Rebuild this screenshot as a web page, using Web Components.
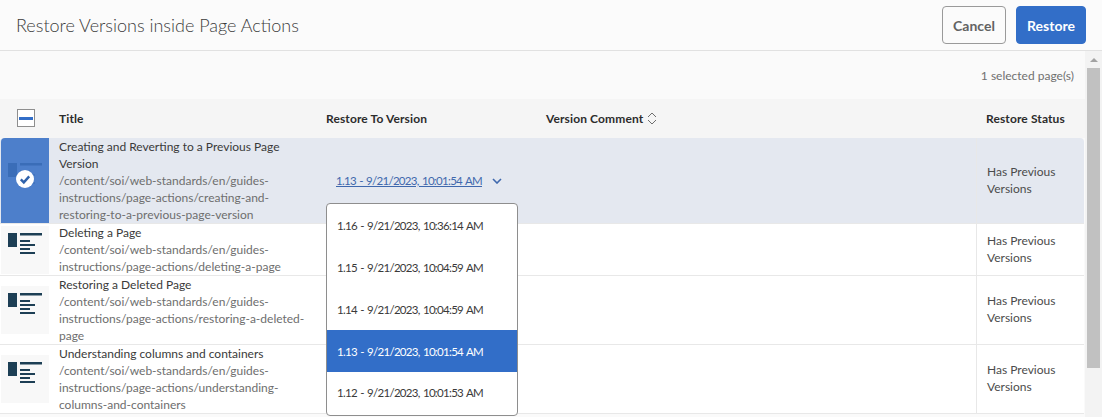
<!DOCTYPE html>
<html>
<head>
<meta charset="utf-8">
<title>Restore Versions</title>
<style>
    html, body { margin: 0; padding: 0; height: 100%; overflow: hidden; }
    body { font-family: Lato, "Open Sans", sans-serif; color: #2c2c2c; background: #fafafa; }
</style>
</head>
<body>

<restore-page>
    <restore-header slot="header" heading="Restore Versions inside Page Actions">
        <restore-button>Cancel</restore-button>
        <restore-button primary>Restore</restore-button>
    </restore-header>

    <restore-row selected>
        <span slot="title">Creating and Reverting to a Previous Page Version</span>
        <span slot="path">/content/soi/web-standards/en/guides-instructions/page-actions/creating-and-restoring-to-a-previous-page-version</span>
        <version-select slot="version" value="1.13 - 9/21/2023, 10:01:54 AM">
            <version-option>1.16 - 9/21/2023, 10:36:14 AM</version-option>
            <version-option>1.15 - 9/21/2023, 10:04:59 AM</version-option>
            <version-option>1.14 - 9/21/2023, 10:04:59 AM</version-option>
            <version-option active>1.13 - 9/21/2023, 10:01:54 AM</version-option>
            <version-option>1.12 - 9/21/2023, 10:01:53 AM</version-option>
        </version-select>
    </restore-row>
    <restore-row>
        <span slot="title">Deleting a Page</span>
        <span slot="path">/content/soi/web-standards/en/guides-instructions/page-actions/deleting-a-page</span>
    </restore-row>
    <restore-row>
        <span slot="title">Restoring a Deleted Page</span>
        <span slot="path">/content/soi/web-standards/en/guides-instructions/page-actions/restoring-a-deleted-page</span>
    </restore-row>
    <restore-row>
        <span slot="title">Understanding columns and containers</span>
        <span slot="path">/content/soi/web-standards/en/guides-instructions/page-actions/understanding-columns-and-containers</span>
    </restore-row>
</restore-page>

<script>
const pageIcon = (main, line, opacity) => `
    <svg width="34" height="21" viewBox="0 0 34 21" style="display:block">
        <rect x="0" y="0" width="9" height="14" fill="${main}"/>
        <rect x="12" y="0" width="22" height="2.5" fill="${main}"/>
        <g fill="${line}" opacity="${opacity}">
            <rect x="12" y="7" width="10" height="2"/>
            <rect x="12" y="11" width="15" height="2"/>
            <rect x="12" y="15" width="10" height="2"/>
            <rect x="12" y="19" width="15" height="2"/>
        </g>
    </svg>`

class RestoreButton extends HTMLElement {
    constructor() {
        super()
        this.attachShadow({ mode: 'open' })
        this.shadowRoot.innerHTML = `
            <style>
                :host { display: inline-block; }
                button {
                    display: block;
                    height: 38px;
                    width: 64px;
                    padding: 0;
                    border: 1px solid #9a9a9a;
                    border-radius: 4px;
                    background: #fbfbfb;
                    color: #636363;
                    font: 700 14px Lato, sans-serif;
                }
                :host([primary]) button {
                    width: 70px;
                    background: #326ec8;
                    border-color: #326ec8;
                    color: #fff;
                }
            </style>
            <button><slot></slot></button>`
    }
}

class RestoreHeader extends HTMLElement {
    constructor() {
        super()
        this.attachShadow({ mode: 'open' })
        this.shadowRoot.innerHTML = `
            <style>
                :host {
                    display: flex;
                    align-items: center;
                    justify-content: space-between;
                    height: 50px;
                    padding: 0 16px;
                    background: #fbfbfb;
                    border-bottom: 1px solid #e1e1e1;
                }
                h1 { margin: 0; font: 300 18px Lato, sans-serif; color: #3c3c3c; }
                .actions { display: flex; gap: 10px; }
            </style>
            <h1></h1>
            <div class="actions"><slot></slot></div>`
        this.shadowRoot.querySelector('h1').textContent = this.getAttribute('heading')
    }
}

class RestorePage extends HTMLElement {
    constructor() {
        super()
        this.attachShadow({ mode: 'open' })
        this.shadowRoot.innerHTML = `
            <style>
                :host { display: block; height: 417px; overflow: hidden; position: relative; }
                .main { display: flex; height: 366px; }
                .content { flex: 1; min-width: 0; }
                .count {
                    height: 48px;
                    display: flex;
                    align-items: center;
                    justify-content: flex-end;
                    padding-right: 11px;
                    font-size: 12px;
                    color: #707070;
                }
                .head {
                    display: grid;
                    grid-template-columns: 49px 267px 220px 440px 1fr;
                    height: 38px;
                    padding-bottom: 1px;
                    align-items: center;
                    background: #f5f5f5;
                    font-size: 12px;
                    font-weight: 700;
                    letter-spacing: 0.12px;
                    color: #2c2c2c;
                }
                .head > div { padding-left: 10px; }
                .check { padding-left: 17px !important; display: flex; }
                .box {
                    width: 16px; height: 16px;
                    border: 1px solid #8e8e8e;
                    display: flex; align-items: center; justify-content: center;
                    background: #fff;
                }
                .box i { width: 14px; height: 3px; background: #326ec8; display: block; }
                .sort { display: flex; align-items: center; gap: 4px; }
                .bar { width: 17px; flex: none; background: #f3f3f3; display: flex; flex-direction: column; align-items: center; }
                .arrow { width: 0; height: 0; margin: 7px 0 6px; border: 4px solid transparent; border-top: 0; border-bottom: 4px solid #a3a3a3; }
                .thumb { width: 13px; height: 300px; background: #c1c1c1; }
            </style>
            <slot name="header"></slot>
            <div class="main">
                <div class="content">
                    <div class="count">1 selected page(s)</div>
                    <div class="head">
                        <div class="check"><span class="box"><i></i></span></div>
                        <div>Title</div>
                        <div>Restore To Version</div>
                        <div class="sort">Version Comment
                            <svg width="10" height="13" viewBox="0 0 10 13" fill="none" stroke="#6e6e6e"><path d="M1 5l4-4 4 4M1 8l4 4 4-4"/></svg>
                        </div>
                        <div>Restore Status</div>
                    </div>
                    <slot></slot>
                </div>
                <div class="bar"><div class="arrow"></div><div class="thumb"></div></div>
            </div>`
    }
}

class RestoreRow extends HTMLElement {
    constructor() {
        super()
        this.attachShadow({ mode: 'open' })
        const selected = this.hasAttribute('selected')
        this.shadowRoot.innerHTML = `
            <style>
                :host {
                    display: grid;
                    grid-template-columns: 49px 267px 660px 1fr;
                    margin-right: 1px;
                    background: #fff;
                    border-bottom: 1px solid #e8e8e8;
                    font-size: 12px;
                    line-height: 17px;
                }
                :host([selected]) { background: #e4e8f0; border-radius: 4px 4px 0 0; }
                .thumb { display: flex; align-items: center; padding-left: 1px; }
                .tile {
                    width: 48px; height: 48px;
                    box-sizing: border-box;
                    padding: 7px 0 0 7px;
                    background: #f8f8f8;
                    position: relative;
                }
                :host([selected]) .tile {
                    height: 100%;
                    background: #4d7fcb;
                    border-radius: 4px 0 0 0;
                    padding-top: 25px;
                }
                .mark { position: absolute; left: 15px; top: 32px; }
                .title-cell { padding: 0 10px; }
                .title { color: #3a3a3a; }
                .path { color: #6e6e6e; }
                .version { display: flex; align-items: center; padding-left: 20px; position: relative; }
                .status {
                    display: flex;
                    align-items: center;
                    padding: 0 20px 2px 10px;
                    border-left: 1px solid #e8e8e8;
                    color: #4b4b4b;
                }
            </style>
            <div class="thumb"><div class="tile">
                ${selected ? pageIcon('#3a6db8', '#3a6db8', 0.6) : pageIcon('#1d3f55', '#1d3f55', 1)}
                ${selected ? `<svg class="mark" width="18" height="18" viewBox="0 0 18 18"><circle cx="9" cy="9" r="9" fill="#fff"/><path d="M4.8 9.4l3 3 5.4-6" fill="none" stroke="#2f62ab" stroke-width="2.4"/></svg>` : ''}
            </div></div>
            <div class="title-cell">
                <div class="title"><slot name="title"></slot></div>
                <div class="path"><slot name="path"></slot></div>
            </div>
            <div class="version"><slot name="version"></slot></div>
            <div class="status">Has Previous Versions</div>`
    }
}

class VersionSelect extends HTMLElement {
    constructor() {
        super()
        this.attachShadow({ mode: 'open' })
        this.shadowRoot.innerHTML = `
            <style>
                :host { display: inline-flex; align-items: center; gap: 10px; font-size: 11.5px; letter-spacing: -0.7px; word-spacing: 1px; }
                .value { color: #3f68ad; text-decoration: underline; }
                .menu {
                    position: absolute;
                    left: 10px;
                    top: 65px;
                    width: 190px;
                    padding: 1px 0;
                    background: #fff;
                    border: 1px solid #8e8e8e;
                    border-radius: 4px;
                    z-index: 5;
                }
            </style>
            <span class="value"></span>
            <svg width="10" height="6" viewBox="0 0 10 6" fill="none" stroke="#3f68ad" stroke-width="1.6"><path d="M1 1l4 4 4-4"/></svg>
            <div class="menu"><slot></slot></div>`
        this.shadowRoot.querySelector('.value').textContent = this.getAttribute('value')
    }
}

class VersionOption extends HTMLElement {
    constructor() {
        super()
        this.attachShadow({ mode: 'open' })
        this.shadowRoot.innerHTML = `
            <style>
                :host {
                    display: flex;
                    align-items: center;
                    height: 41.75px;
                    padding-left: 10px;
                    color: #3a3a3a;
                }
                :host([active]) { background: #326ec8; color: #fff; }
            </style>
            <slot></slot>`
    }
}

customElements.define('restore-button', RestoreButton)
customElements.define('restore-header', RestoreHeader)
customElements.define('restore-page', RestorePage)
customElements.define('restore-row', RestoreRow)
customElements.define('version-select', VersionSelect)
customElements.define('version-option', VersionOption)
</script>
</body>
</html>
